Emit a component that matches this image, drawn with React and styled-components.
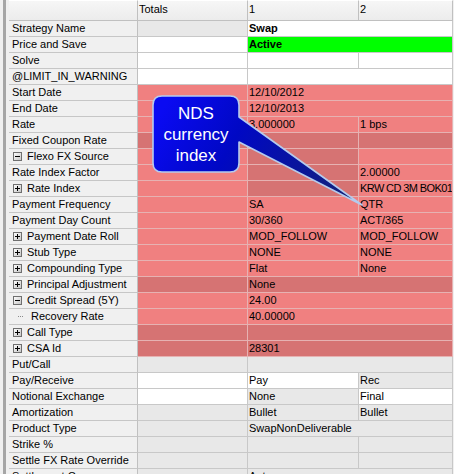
import React from 'react';
import styled, { createGlobalStyle } from 'styled-components';

const Global = createGlobalStyle`
  html, body { margin: 0; padding: 0; background: #f0f0f0; overflow: hidden; }
  body { font-family: "Liberation Sans", Arial, sans-serif; font-size: 11px; color: #000; }
`;

const BG = { W: '#ffffff', G: '#e8e8e8', R: '#f08080', D: '#d67373', A: '#00ff00' };
const LINE = { W: '#c8c8c8', G: '#c8c8c8', R: '#e6b2b2', D: '#e6b2b2', A: '#c8c8c8' };

const Page = styled.div`
  position: relative;
  width: 454px;
  height: 474px;
  overflow: hidden;
  display: flex;
  background: #f0f0f0;
`;

const Rail = styled.div`
  flex: none;
  width: 3px;
  margin: 0 3px;
  background: #a6a6a6;
`;

const Sheet = styled.div`
  flex: none;
  width: 444px;
  display: flex;
  flex-direction: column;
`;

const Row = styled.div`
  display: grid;
  grid-template-columns: 129px 110px 111px 94px;
  height: ${(p) => (p.$header ? 21 : 16)}px;
  flex: none;
`;

const HeadCell = styled.div`
  box-sizing: border-box;
  border-top: 1px solid #ffffff;
  border-right: 1px solid #c0c0c0;
  border-bottom: 1px solid #c0c0c0;
  background: linear-gradient(#f6f6f6, #ececec);
  padding-left: 1px;
  line-height: 17px;
  white-space: nowrap;
`;

const LabelCell = styled.div`
  box-sizing: border-box;
  display: flex;
  align-items: center;
  border-right: 1px solid #c0c0c0;
  border-bottom: 1px solid #c6c6c6;
  background: #f0f0f0;
  padding-left: 3px;
  line-height: 15px;
  white-space: nowrap;
  overflow: hidden;
`;

const Cell = styled.div`
  box-sizing: border-box;
  grid-column: span ${(p) => p.$span};
  border-right: 1px solid ${(p) => LINE[p.$bg]};
  border-bottom: 1px solid ${(p) => LINE[p.$bg]};
  background: ${(p) => BG[p.$bg]};
  font-weight: ${(p) => (p.$bold ? 700 : 400)};
  letter-spacing: ${(p) => (p.$tight ? '-0.6px' : 'normal')};
  padding-left: 1px;
  line-height: 15px;
  white-space: nowrap;
  overflow: hidden;
`;

const ExpanderBox = styled.svg`
  flex: none;
  margin-left: 1px;
  margin-right: 5px;
`;

const TreeDots = styled.span`
  flex: none;
  width: 5px;
  margin-left: 6px;
  margin-right: 8px;
  border-top: 1px dotted #8a8a8a;
`;

const CalloutShape = styled.svg`
  position: absolute;
  left: 0;
  top: 0;
  pointer-events: none;
`;

const CalloutText = styled.div`
  position: absolute;
  left: 153px;
  top: 96px;
  width: 86px;
  height: 76px;
  display: flex;
  flex-direction: column;
  align-items: center;
  justify-content: center;
  color: #ffffff;
  font-family: "Liberation Sans", Arial, sans-serif;
  font-size: 17px;
  line-height: 21px;
  text-align: center;
`;

function Expander({ open }) {
  return (
    <ExpanderBox width="9" height="9" viewBox="0 0 9 9" shapeRendering="crispEdges">
      <defs>
        <linearGradient id="expg" x1="0" y1="0" x2="1" y2="1">
          <stop offset="0" stopColor="#ffffff" />
          <stop offset="1" stopColor="#c4c4c4" />
        </linearGradient>
      </defs>
      <rect x="0.5" y="0.5" width="8" height="8" fill="url(#expg)" stroke="#6f6f6f" />
      <path d="M2 4.5H7" stroke="#000" />
      {!open && <path d="M4.5 2V7" stroke="#000" />}
    </ExpanderBox>
  );
}

const rows = [
  { label: 'Strategy Name', tot: 'G', cells: [{ bg: 'W', text: 'Swap', bold: true, span: 2 }] },
  { label: 'Price and Save', tot: 'W', cells: [{ bg: 'A', text: 'Active', bold: true, span: 2 }] },
  { label: 'Solve', tot: 'W', cells: [{ bg: 'W' }, { bg: 'W' }] },
  { label: '@LIMIT_IN_WARNING', tot: 'W', cells: [{ bg: 'W', span: 2 }] },
  { label: 'Start Date', tot: 'R', cells: [{ bg: 'R', text: '12/10/2012', span: 2 }] },
  { label: 'End Date', tot: 'R', cells: [{ bg: 'R', text: '12/10/2013', span: 2 }] },
  { label: 'Rate', tot: 'R', cells: [{ bg: 'R', text: '3.000000' }, { bg: 'R', text: '1 bps' }] },
  { label: 'Fixed Coupon Rate', tot: 'D', cells: [{ bg: 'D' }, { bg: 'D' }] },
  { label: 'Flexo FX Source', icon: 'open', tot: 'R', cells: [{ bg: 'D' }, { bg: 'R' }] },
  { label: 'Rate Index Factor', tot: 'R', cells: [{ bg: 'D' }, { bg: 'R', text: '2.00000' }] },
  { label: 'Rate Index', icon: 'closed', tot: 'R', cells: [{ bg: 'D' }, { bg: 'R', text: 'KRW CD 3M BOK01', tight: true }] },
  { label: 'Payment Frequency', tot: 'R', cells: [{ bg: 'R', text: 'SA' }, { bg: 'R', text: 'QTR' }] },
  { label: 'Payment Day Count', tot: 'R', cells: [{ bg: 'R', text: '30/360' }, { bg: 'R', text: 'ACT/365' }] },
  { label: 'Payment Date Roll', icon: 'closed', tot: 'R', cells: [{ bg: 'R', text: 'MOD_FOLLOW' }, { bg: 'R', text: 'MOD_FOLLOW' }] },
  { label: 'Stub Type', icon: 'closed', tot: 'R', cells: [{ bg: 'R', text: 'NONE' }, { bg: 'R', text: 'NONE' }] },
  { label: 'Compounding Type', icon: 'closed', tot: 'R', cells: [{ bg: 'R', text: 'Flat' }, { bg: 'R', text: 'None' }] },
  { label: 'Principal Adjustment', icon: 'closed', tot: 'D', cells: [{ bg: 'D', text: 'None', span: 2 }] },
  { label: 'Credit Spread (5Y)', icon: 'open', tot: 'R', cells: [{ bg: 'R', text: '24.00', span: 2 }] },
  { label: 'Recovery Rate', child: true, tot: 'R', cells: [{ bg: 'R', text: '40.00000', span: 2 }] },
  { label: 'Call Type', icon: 'closed', tot: 'D', cells: [{ bg: 'D', span: 2 }] },
  { label: 'CSA Id', icon: 'closed', tot: 'D', cells: [{ bg: 'D', text: '28301', span: 2 }] },
  { label: 'Put/Call', tot: 'G', cells: [{ bg: 'G', span: 2 }] },
  { label: 'Pay/Receive', tot: 'W', cells: [{ bg: 'W', text: 'Pay' }, { bg: 'G', text: 'Rec' }] },
  { label: 'Notional Exchange', tot: 'W', cells: [{ bg: 'G', text: 'None' }, { bg: 'W', text: 'Final' }] },
  { label: 'Amortization', tot: 'G', cells: [{ bg: 'G', text: 'Bullet' }, { bg: 'G', text: 'Bullet' }] },
  { label: 'Product Type', tot: 'G', cells: [{ bg: 'G', text: 'SwapNonDeliverable', span: 2 }] },
  { label: 'Strike %', tot: 'G', cells: [{ bg: 'G' }, { bg: 'G' }] },
  { label: 'Settle FX Rate Override', tot: 'G', cells: [{ bg: 'G' }, { bg: 'G' }] },
  { label: 'Settlement Currency', tot: 'G', cells: [{ bg: 'G', text: 'Auto', span: 2 }] },
];

function Callout() {
  return (
    <>
      <CalloutShape width="454" height="474" viewBox="0 0 454 474">
        <defs>
          <linearGradient id="callg" gradientUnits="userSpaceOnUse" x1="170" y1="96" x2="362" y2="205">
            <stop offset="0" stopColor="#0a0af2" />
            <stop offset="0.35" stopColor="#0008c4" />
            <stop offset="1" stopColor="#142470" />
          </linearGradient>
        </defs>
        <path
          d="M162 96 H230 Q239 96 239 105 V117 L362 205 L239 142 V163 Q239 172 230 172 H162 Q153 172 153 163 V105 Q153 96 162 96 Z"
          fill="url(#callg)"
          stroke="#b4cbee"
          strokeWidth="1.6"
          strokeLinejoin="round"
        />
      </CalloutShape>
      <CalloutText>
        <span>NDS</span>
        <span>currency</span>
        <span>index</span>
      </CalloutText>
    </>
  );
}

export default function App() {
  return (
    <Page>
      <Global />
      <Rail />
      <Sheet>
        <Row $header>
          <HeadCell />
          <HeadCell>Totals</HeadCell>
          <HeadCell>1</HeadCell>
          <HeadCell>2</HeadCell>
        </Row>
        {rows.map((r) => (
          <Row key={r.label}>
            <LabelCell>
              {r.icon && <Expander open={r.icon === 'open'} />}
              {r.child && <TreeDots />}
              {r.label}
            </LabelCell>
            <Cell $bg={r.tot} $span={1} />
            {r.cells.map((c, i) => (
              <Cell key={i} $bg={c.bg} $span={c.span || 1} $bold={c.bold} $tight={c.tight}>
                {c.text}
              </Cell>
            ))}
          </Row>
        ))}
      </Sheet>
      <Callout />
    </Page>
  );
}
